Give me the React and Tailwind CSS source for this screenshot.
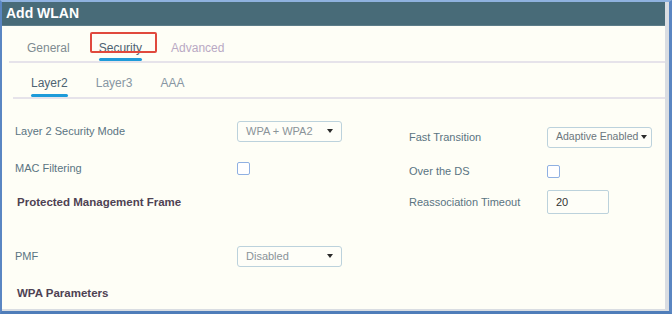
import React from 'react';

const font = { fontFamily: '"Liberation Sans", Arial, sans-serif' };

function Caret() {
  return (
    <svg width="6" height="4" viewBox="0 0 6 4" className="shrink-0">
      <path d="M0 0 L6 0 L3 4 Z" fill="#2a2a2a" />
    </svg>
  );
}

function Select({ value, width = 'w-[105px]', pr = 'pr-[8px]', text = 'text-[#8a9399] text-[11px]' }) {
  return (
    <div className={`${width} h-[21px] flex items-center justify-between gap-[2px] pl-[8px] ${pr} border border-[#bcd2dc] rounded-[3px] bg-[#fefef8] ${text}`}>
      <span className="whitespace-nowrap">{value}</span>
      <Caret />
    </div>
  );
}

function Checkbox() {
  return <div className="w-[13px] h-[13px] border border-[#8fb0e2] rounded-[2px] bg-white" />;
}

function Label({ children, w }) {
  return <div className={`${w} shrink-0 text-[11px] text-[#5a7482]`}>{children}</div>;
}

export default function App() {
  return (
    <div
      className="w-[672px] h-[314px] border-l-[2px] border-t-[2px] border-r-[3px] border-b-[3px] border-l-[#5a86c2] border-t-[#8fb2df] border-r-[#5a86c2] border-b-[#4f7db9] overflow-hidden"
      style={font}
    >
      <div className="h-full flex flex-col bg-[#fefef6] border-r-[4px] border-b-[2px] border-[#d9dde2] overflow-hidden">
        <div className="h-[24px] shrink-0 bg-[#486b78] flex items-center pl-[4px] text-white text-[14px] font-bold border-b border-[#5d7d89]">
          Add WLAN
        </div>

        {/* main tabs */}
        <div className="relative ml-[7px] pt-[15px] pl-[15px] flex gap-[23px] border-b-2 border-[#e6e3ea] text-[12px] leading-[14px]">
          <div className="px-[3px]">
            <div className="text-[#7f8b91]">General</div>
            <div className="mt-[3px] h-[3px]" />
          </div>
          <div className="px-[3px]">
            <div className="text-[#4d6372]">Security</div>
            <div className="mt-[3px] h-[3px] rounded-full bg-[#1d9bd9]" />
          </div>
          <div className="px-[3px]">
            <div className="text-[#b9a9c4]">Advanced</div>
            <div className="mt-[3px] h-[3px]" />
          </div>
          <div className="absolute left-[81px] top-[6px] w-[67px] h-[21px] border-2 border-[#e0493d] rounded-[2px]" />
        </div>

        {/* sub tabs */}
        <div className="ml-[11px] pt-[13px] pl-[16px] flex gap-[24px] border-b-2 border-[#e6e3ea] text-[12px] leading-[14px]">
          <div className="px-[2px]">
            <div className="text-[#4d6372]">Layer2</div>
            <div className="mt-[4px] h-[3px] rounded-full bg-[#1d9bd9]" />
          </div>
          <div className="px-[2px]">
            <div className="text-[#8796a3]">Layer3</div>
            <div className="mt-[4px] h-[3px]" />
          </div>
          <div className="px-[2px]">
            <div className="text-[#8796a3]">AAA</div>
            <div className="mt-[4px] h-[3px]" />
          </div>
        </div>

        {/* form */}
        <div className="flex pl-[13px]">
          <div className="w-[394px] shrink-0 flex flex-col pt-[21px]">
            <div className="h-[22px] flex items-center">
              <Label w="w-[222px]">Layer 2 Security Mode</Label>
              <Select value="WPA + WPA2" />
            </div>
            <div className="mt-[15px] h-[22px] flex items-center">
              <Label w="w-[222px]">MAC Filtering</Label>
              <Checkbox />
            </div>
            <div className="mt-[13px] h-[22px] flex items-center ml-[2px] text-[11.5px] font-bold text-[#4e4253]">
              Protected Management Frame
            </div>
            <div className="mt-[31px] h-[22px] flex items-center">
              <Label w="w-[222px]">PMF</Label>
              <Select value="Disabled" />
            </div>
            <div className="mt-[16px] h-[22px] flex items-center ml-[2px] text-[11.5px] font-bold text-[#4e4253]">
              WPA Parameters
            </div>
          </div>

          <div className="flex flex-col pt-[27px]">
            <div className="h-[22px] flex items-center">
              <Label w="w-[138px]">Fast Transition</Label>
              <Select value="Adaptive Enabled" pr="pr-[4px]" text="text-[#6b767c] text-[10.5px]" />
            </div>
            <div className="mt-[12px] h-[22px] flex items-center">
              <Label w="w-[138px]">Over the DS</Label>
              <Checkbox />
            </div>
            <div className="mt-[8px] h-[24px] flex items-center">
              <Label w="w-[138px]">Reassociation Timeout</Label>
              <div className="w-[62px] h-[24px] flex items-center pl-[8px] border border-[#bcd2dc] rounded-[2px] bg-[#fefef8] text-[11px] text-[#333]">
                20
              </div>
            </div>
          </div>
        </div>
      </div>
    </div>
  );
}
